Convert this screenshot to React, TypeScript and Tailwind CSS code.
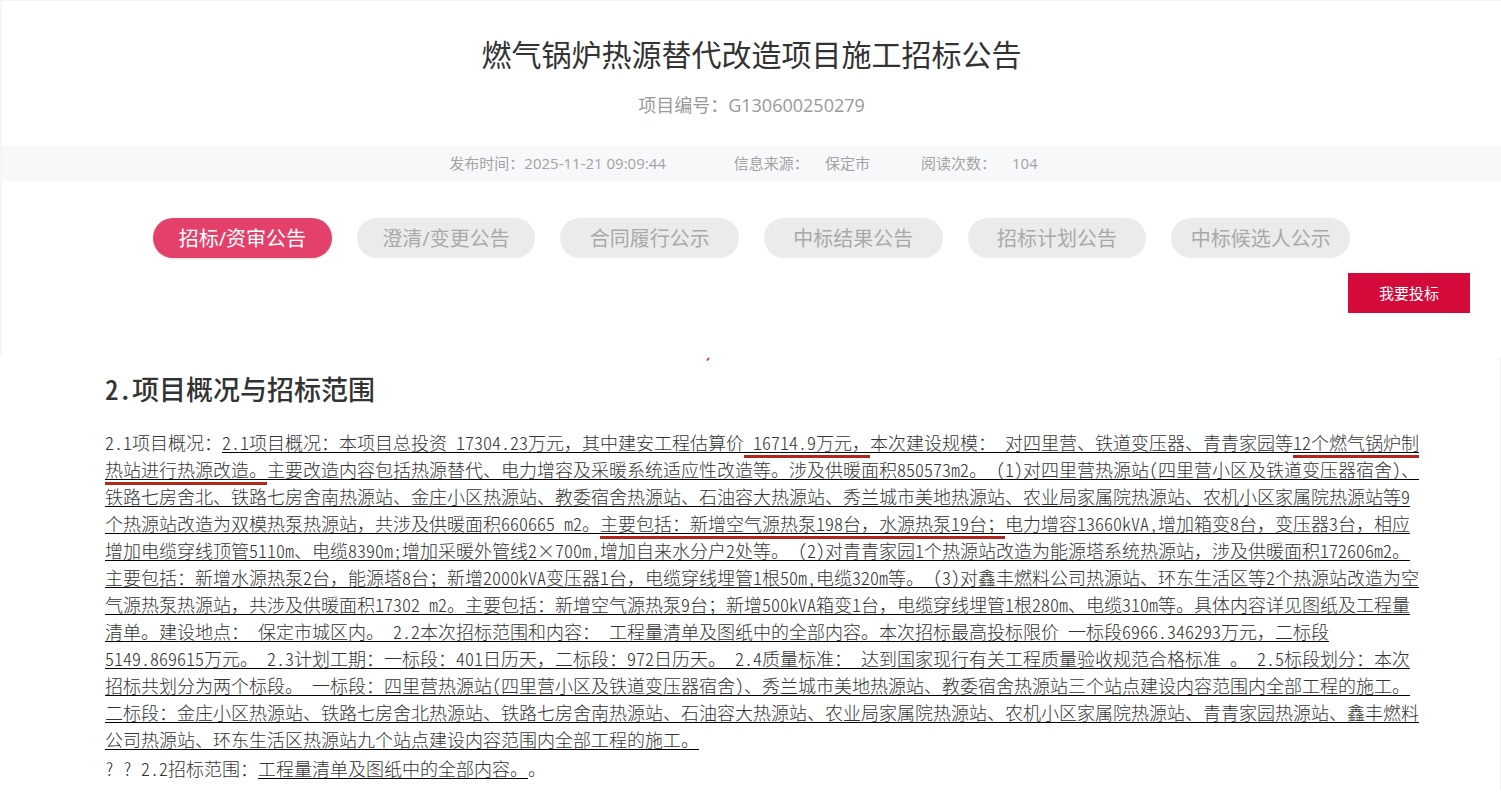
import { Fragment, type ReactNode } from "react";

const tabs = [
  "招标/资审公告",
  "澄清/变更公告",
  "合同履行公示",
  "中标结果公告",
  "招标计划公告",
  "中标候选人公示",
];

// latin text is half width in the notice, the chinese comma has to stay full width
function Zh({ children }: { children: string }) {
  const parts = children.split("，");
  return (
    <>
      {parts.map((part, i) => (
        <Fragment key={i}>
          {i > 0 && <span className="[font-feature-settings:normal]">，</span>}
          {part}
        </Fragment>
      ))}
    </>
  );
}

function Mark({ children }: { children: string }) {
  return (
    <span className="border-b-3 border-[#b3261a]">
      <Zh>{children}</Zh>
    </span>
  );
}

function Underline({ children }: { children: ReactNode }) {
  return (
    <u className="decoration-black decoration-1 underline-offset-2 [text-decoration-skip-ink:none]">
      {children}
    </u>
  );
}

function NoticeHeader() {
  return (
    <header className="border-t border-l-2 border-t-[#f3f4f5] border-l-[#f5f5f6] pb-[44px] font-['Open_Sans','Noto_Sans_CJK_SC',sans-serif]">
      <h1 className="pt-[34px] text-center text-[30px] leading-10 text-[#333]">
        燃气锅炉热源替代改造项目施工招标公告
      </h1>
      <p className="mt-4 text-center text-lg leading-7 text-[#999]">
        项目编号：G130600250279
      </p>
      <div className="mt-[27px] flex h-[35px] items-center justify-center bg-[#f7f8fa] pr-4 text-[15px] text-[#a3a3a3]">
        <span>发布时间：2025-11-21 09:09:44</span>
        <span className="ml-[68px]">信息来源：</span>
        <span className="ml-4">保定市</span>
        <span className="ml-[51px]">阅读次数：</span>
        <span className="ml-4">104</span>
      </div>
      <nav className="mx-auto mt-[37px] grid max-w-[1197px] grid-cols-6 gap-[25px]">
        {tabs.map((tab, i) => (
          <button
            key={tab}
            type="button"
            className={`h-10 rounded-full pt-0.5 text-xl whitespace-nowrap ${
              i === 0 ? "bg-[#e3416a] text-white shadow-sm" : "bg-[#ebebeb] text-[#a9a9a9]"
            }`}
          >
            {tab}
          </button>
        ))}
      </nav>
      <div className="mt-[15px] flex justify-end pr-[31px]">
        <button type="button" className="h-10 w-[122px] bg-[#d30a3a] text-[15px] text-white">
          我要投标
        </button>
      </div>
    </header>
  );
}

function NoticeBody() {
  return (
    <main className="relative border-r border-[#f0f0f0] pt-4 pr-20 pb-2 pl-[105px] text-[#333]">
      <svg
        className="absolute top-0 left-[47%] ml-px h-[4px] w-[4px]"
        viewBox="0 0 4 4"
        aria-hidden="true"
      >
        <path d="M1 3.5 L3 1" stroke="#c0281c" strokeWidth="1.4" fill="none" />
      </svg>
      <h2 className="text-[27px] leading-8 font-medium [font-feature-settings:'hwid']">
        2.项目概况与招标范围
      </h2>
      <div className="mt-6 text-lg leading-[27px] font-light [font-feature-settings:'hwid'] [text-spacing-trim:space-all]">
        <p>
          2.1项目概况：
          <Underline>
            <Zh>2.1项目概况：本项目总投资 17304.23万元，其中建安工程估算价</Zh>
            <Mark> 16714.9万元，</Mark>
            <Zh>本次建设规模： 对四里营、铁道变压器、青青家园等</Zh>
            <Mark>12个燃气锅炉制热站进行热源改造。</Mark>
            <Zh>主要改造内容包括热源替代、电力增容及采暖系统适应性改造等。涉及供暖面积850573m2。 (1)对四里营热源站(四里营小区及铁道变压器宿舍)、铁路七房舍北、铁路七房舍南热源站、金庄小区热源站、教委宿舍热源站、石油容大热源站、秀兰城市美地热源站、农业局家属院热源站、农机小区家属院热源站等9个热源站改造为双模热泵热源站，共涉及供暖面积660665 m2。</Zh>
            <Mark>主要包括：新增空气源热泵198台，水源热泵19台；</Mark>
            <Zh>电力增容13660kVA,增加箱变8台，变压器3台，相应增加电缆穿线顶管5110m、电缆8390m;增加采暖外管线2×700m,增加自来水分户2处等。 (2)对青青家园1个热源站改造为能源塔系统热源站，涉及供暖面积172606m2。主要包括：新增水源热泵2台，能源塔8台；新增2000kVA变压器1台，电缆穿线埋管1根50m,电缆320m等。 (3)对鑫丰燃料公司热源站、环东生活区等2个热源站改造为空气源热泵热源站，共涉及供暖面积17302 m2。主要包括：新增空气源热泵9台；新增500kVA箱变1台，电缆穿线埋管1根280m、电缆310m等。具体内容详见图纸及工程量清单。建设地点： 保定市城区内。 2.2本次招标范围和内容： 工程量清单及图纸中的全部内容。本次招标最高投标限价 一标段6966.346293万元，二标段5149.869615万元。 2.3计划工期：一标段：401日历天，二标段：972日历天。 2.4质量标准： 达到国家现行有关工程质量验收规范合格标准 。 2.5标段划分：本次招标共划分为两个标段。 一标段：四里营热源站(四里营小区及铁道变压器宿舍)、秀兰城市美地热源站、教委宿舍热源站三个站点建设内容范围内全部工程的施工。二标段：金庄小区热源站、铁路七房舍北热源站、铁路七房舍南热源站、石油容大热源站、农业局家属院热源站、农机小区家属院热源站、青青家园热源站、鑫丰燃料公司热源站、环东生活区热源站九个站点建设内容范围内全部工程的施工。</Zh>
          </Underline>
        </p>
        <p className="mt-0.5">
          ? ? 2.2招标范围：
          <Underline>工程量清单及图纸中的全部内容。</Underline>。
        </p>
      </div>
    </main>
  );
}

export default function App() {
  return (
    <div lang="zh-CN" className="bg-white font-['Noto_Sans_CJK_SC',sans-serif]">
      <NoticeHeader />
      <NoticeBody />
    </div>
  );
}
